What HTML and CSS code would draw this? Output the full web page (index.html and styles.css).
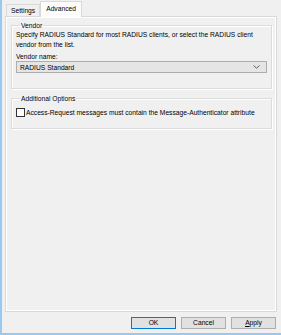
FILE: index.html
```html
<!DOCTYPE html>
<html lang="en">

<head>
    <meta charset="UTF-8">
    <title>RADIUS Client Properties</title>
    <link rel="stylesheet" href="styles.css">
</head>

<body>
    <div class="window">
        <div class="tabs">
            <div class="tab">Settings</div>
            <div class="tab tab-active">Advanced</div>
        </div>

        <div class="tab-page">
            <fieldset class="group">
                <legend>Vendor</legend>
                <p class="hint">Specify RADIUS Standard for most RADIUS clients, or select the RADIUS client vendor from the list.</p>
                <label class="field-label">Vendor name:</label>
                <div class="combo">
                    <span>RADIUS Standard</span>
                    <svg class="chevron" width="7" height="4" viewBox="0 0 7 4">
                        <path d="M0.5 0.5 L3.5 3.2 L6.5 0.5" fill="none" stroke="#606060" stroke-width="1"/>
                    </svg>
                </div>
            </fieldset>

            <fieldset class="group group-options">
                <legend>Additional Options</legend>
                <label class="check">
                    <span class="check-box"></span>
                    Access-Request messages must contain the Message-Authenticator attribute
                </label>
            </fieldset>
        </div>

        <div class="button-row">
            <button class="btn btn-default">OK</button>
            <button class="btn">Cancel</button>
            <button class="btn"><u>A</u>pply</button>
        </div>
    </div>
</body>

</html>
```

FILE: styles.css
```css
* {
    box-sizing: border-box;
    margin: 0;
    padding: 0;
}

body {
    font-family: 'Liberation Sans', Arial, sans-serif;
    font-size: 6.7px;
    color: #000;
    background-color: #f0f0f0;
}

.window {
    width: 281px;
    height: 335px;
    border-left: 2px solid #99c9ef;
    border-bottom: 2px solid #99c9ef;
    padding-top: 1px;
}

.tabs {
    display: flex;
    align-items: flex-end;
    height: 15px;
    padding-left: 4px;
}

.tab {
    height: 12px;
    padding: 0 4px;
    line-height: 11px;
    border: 1px solid #d9d9d9;
    border-bottom: none;
    background-color: #f0f0f0;
}

.tab-active {
    height: 16px;
    margin-bottom: -1px;
    padding: 0 5px;
    line-height: 14px;
    background-color: #fcfcfc;
    position: relative;
}

.tab-page {
    width: 272px;
    height: 296px;
    margin-left: 3px;
    padding: 4px 4px 0 5px;
    border: 1px solid #d9d9d9;
    box-shadow: inset 1px 1px 0 #fff, inset -1px -1px 0 #fff;
}

.group {
    border: 1px solid #dcdcdc;
    box-shadow: inset 1px 1px 0 #fff, 1px 1px 0 #fff;
    padding: 0 4px;
    height: 68px;
}

.group legend {
    margin-left: 4px;
    padding: 0 1px;
    line-height: 9px;
}

.hint {
    line-height: 10px;
    padding-right: 10px;
}

.field-label {
    display: block;
    margin-top: 3px;
    line-height: 8px;
}

.combo {
    display: flex;
    align-items: center;
    justify-content: space-between;
    height: 12px;
    padding: 0 6px 0 3px;
    background-color: #e5e5e5;
    border: 1px solid #adadad;
}

.group-options {
    height: 35px;
    margin-top: 5px;
}

.check {
    display: flex;
    align-items: center;
    gap: 1px;
    margin-top: 5px;
}

.check-box {
    width: 9px;
    height: 9px;
    border: 1px solid #333;
    background-color: #fff;
}

.button-row {
    display: flex;
    justify-content: flex-end;
    gap: 5px;
    padding: 5px 5px 0 0;
}

.btn {
    width: 45px;
    height: 12px;
    font-family: inherit;
    font-size: 6.7px;
    line-height: 10px;
    background-color: #e1e1e1;
    border: 1px solid #adadad;
}

.btn-default {
    border-color: #0078d7;
}
```
